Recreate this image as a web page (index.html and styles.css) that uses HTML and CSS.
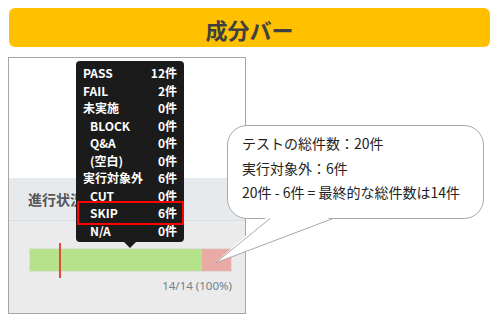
FILE: index.html
```html
<!DOCTYPE html>
<html lang="ja">
<head>
    <meta charset="UTF-8">
    <meta name="viewport" content="width=device-width, initial-scale=1.0">
    <title>成分バー</title>
    <link rel="stylesheet" href="styles.css">
</head>
<body>
    <div class="title-bar">成分バー</div>

    <div class="panel">
        <div class="panel-top"></div>
        <div class="panel-head">進行状況</div>
        <div class="panel-body">
            <div class="progress">
                <div class="seg seg-done"></div>
                <div class="seg seg-skip"></div>
                <div class="marker"></div>
            </div>
            <div class="progress-text">14/14 (100%)</div>
        </div>
    </div>

    <!-- ツールチップ -->
    <div class="tooltip">
        <div class="row"><span>PASS</span><span>12件</span></div>
        <div class="row"><span>FAIL</span><span>2件</span></div>
        <div class="row"><span>未実施</span><span>0件</span></div>
        <div class="row sub"><span>BLOCK</span><span>0件</span></div>
        <div class="row sub"><span>Q&amp;A</span><span>0件</span></div>
        <div class="row sub"><span>(空白)</span><span>0件</span></div>
        <div class="row"><span>実行対象外</span><span>6件</span></div>
        <div class="row sub"><span>CUT</span><span>0件</span></div>
        <div class="row sub"><span>SKIP</span><span>6件</span></div>
        <div class="row sub"><span>N/A</span><span>0件</span></div>
    </div>
    <div class="highlight"></div>

    <!-- 吹き出し -->
    <div class="bubble">
        <p>テストの総件数：20件</p>
        <p>実行対象外：6件</p>
        <p>20件 - 6件 = 最終的な総件数は14件</p>
    </div>
    <svg class="bubble-tail" width="497" height="323" viewBox="0 0 497 323">
        <polygon points="268,216 215,263 335,216" fill="#fff"/>
        <polyline points="270,218.5 215.5,263 333,218.5" fill="none" stroke="#a9a9a9" stroke-width="1"/>
    </svg>
</body>
</html>
```

FILE: styles.css
```css
body {
    margin: 0;
    padding: 8px 7px 0 9px;
    font-family: "Noto Sans CJK JP", "Noto Sans", sans-serif;
    background: #fff;
    position: relative;
    height: 323px;
    box-sizing: border-box;
    overflow: hidden;
}

.title-bar {
    height: 39px;
    background-color: #ffc000;
    border-radius: 6px;
    color: #404040;
    font-size: 22px;
    font-weight: 700;
    display: flex;
    justify-content: center;
    align-items: center;
    padding-top: 2px;
    box-sizing: border-box;
}

.panel {
    margin: 10px 0 0 -1px;
    width: 238px;
    height: 257px;
    border: 1px solid #a6a6a6;
    box-sizing: border-box;
    display: flex;
    flex-direction: column;
}

.panel-top {
    height: 120px;
    background: #fff;
}

.panel-head {
    height: 43px;
    background: #e7eaed;
    border-bottom: 1px solid #dcdfe2;
    box-sizing: border-box;
    color: #555;
    font-size: 14px;
    font-weight: 700;
    padding-left: 19px;
    display: flex;
    align-items: center;
}

.panel-body {
    flex: 1;
    background: #ebebeb;
    padding: 27px 12px 0 20px;
}

.progress {
    position: relative;
    height: 24px;
    border: 1px solid #dedede;
    box-sizing: border-box;
    display: flex;
    width: 203px;
}

.seg-done {
    width: 172px;
    background: #b6e28c;
}

.seg-skip {
    flex: 1;
    background: #eaaaa5;
}

.marker {
    position: absolute;
    left: 29px;
    top: -6px;
    width: 2px;
    height: 35px;
    background: #e04a3a;
}

.progress-text {
    width: 203px;
    text-align: right;
    font-size: 11.5px;
    color: #75808c;
    margin-top: 6px;
    font-family: "Noto Sans", sans-serif;
}

.tooltip {
    position: absolute;
    left: 76px;
    top: 61px;
    width: 108px;
    height: 181px;
    box-sizing: border-box;
    background: #1b1b1b;
    border-radius: 4px;
    padding: 3px 7px 0 7px;
    color: #fff;
    font-size: 12px;
    font-weight: 700;
}

.tooltip::after {
    content: "";
    position: absolute;
    left: 48px;
    bottom: -6px;
    border-left: 6px solid transparent;
    border-right: 6px solid transparent;
    border-top: 6px solid #1b1b1b;
}

.row {
    display: flex;
    justify-content: space-between;
    height: 17.5px;
    line-height: 17.5px;
}

.row.sub span:first-child {
    padding-left: 7px;
}

.highlight {
    position: absolute;
    left: 77px;
    top: 201px;
    width: 107px;
    height: 24px;
    box-sizing: border-box;
    border: 2px solid #f00;
}

.bubble {
    position: absolute;
    left: 227px;
    top: 125px;
    width: 257px;
    height: 94px;
    box-sizing: border-box;
    background: #fff;
    border: 1px solid #a9a9a9;
    border-radius: 20px;
    padding: 5px 0 0 14px;
    color: #222;
    font-size: 14px;
}

.bubble p {
    margin: 0;
    line-height: 24.5px;
}

.bubble-tail {
    position: absolute;
    left: 0;
    top: 0;
    pointer-events: none;
}
```
